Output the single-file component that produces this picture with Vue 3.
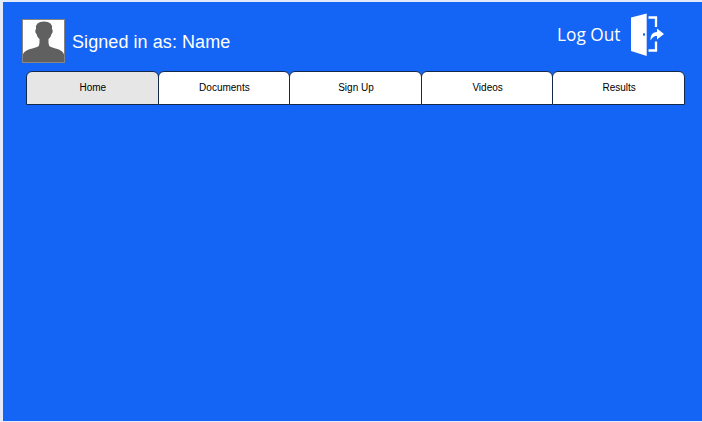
<script setup>
const tabs = ['Home', 'Documents', 'Sign Up', 'Videos', 'Results']
const active = 'Home'
</script>

<template>
  <div class="frame">
    <main class="page">
      <header class="header">
        <div class="user">
          <svg class="avatar" viewBox="0 0 43 44">
            <rect x=".5" y=".5" width="42" height="43" fill="#fff" stroke="#858585" />
            <path fill="#606060" d="M1 43V35.500C2 31 9 30 15 28Q17.500 27 17.500 24V20Q15 18 14.500 15C13 14 13 11 14 10Q13 2.500 22 2.500Q31 2.500 30 10C31 11 31 14 29.500 15Q29 18 26.500 20V24Q26.500 27 29 28C35 30 41 31 42 35.500V43Z" />
          </svg>
          <span class="signed">Signed in as: Name</span>
        </div>
        <div class="logout">
          <span class="logout-label">Log Out</span>
          <svg class="door" viewBox="0 0 34 44">
            <path fill="#fff" fill-rule="evenodd" d="M1 4.500L16.700 .5V43L1 38ZM14 20a1 1.500 0 1 0 .01 0Z" />
            <path fill="none" stroke="#fff" stroke-width="2.300" d="M18.500 4.500H26V14M26 28.500V37.500H18.500" />
            <path fill="#fff" d="M20.500 27.500C20.500 22 22 19.500 27 19V15.500L34 21L27 26.500V23C23.500 23 22.500 24.500 20.500 27.500Z" />
          </svg>
        </div>
      </header>
      <nav class="tabs">
        <a v-for="tab in tabs" :key="tab" class="tab" :class="{ active: tab === active }">{{ tab }}</a>
      </nav>
    </main>
  </div>
</template>

<style>
body {
  margin: 0;
}
</style>

<style scoped>
.frame {
  box-sizing: border-box;
  width: 702px;
  height: 422px;
  padding: 2px 0 1px 3px;
  background: #e3ebf8;
}
.page {
  box-sizing: border-box;
  height: 100%;
  background: #1464f6;
  font-family: "Liberation Sans", Arial, sans-serif;
}
.header {
  display: flex;
  justify-content: space-between;
  height: 69px;
  padding: 0 38px 0 19px;
  box-sizing: border-box;
}
.user {
  display: flex;
  padding-top: 17px;
}
.avatar {
  width: 43px;
  height: 44px;
}
.signed {
  margin: 12px 0 0 7px;
  font-size: 18px;
  line-height: 22px;
  letter-spacing: 0.07px;
  color: #fff;
  white-space: nowrap;
}
.logout {
  display: flex;
  padding-top: 11px;
}
.logout-label {
  margin: 10px 9.5px 0 0;
  font-family: "Open Sans", sans-serif;
  font-size: 17.3px;
  line-height: 24px;
  color: #fff;
  white-space: nowrap;
}
.door {
  width: 34px;
  height: 44px;
}
.tabs {
  display: flex;
  width: 659px;
  margin-left: 23px;
}
.tab {
  flex: 1 1 0;
  box-sizing: border-box;
  height: 34px;
  margin-left: -1px;
  padding-left: 1px;
  border: 1px solid #14294a;
  border-radius: 6px 6px 0 0;
  background: #fff;
  color: #000;
  font-size: 10px;
  line-height: 32px;
  text-align: center;
}
.tab:first-child {
  margin-left: 0;
}
.tab.active {
  background: #e6e6e6;
}
</style>
